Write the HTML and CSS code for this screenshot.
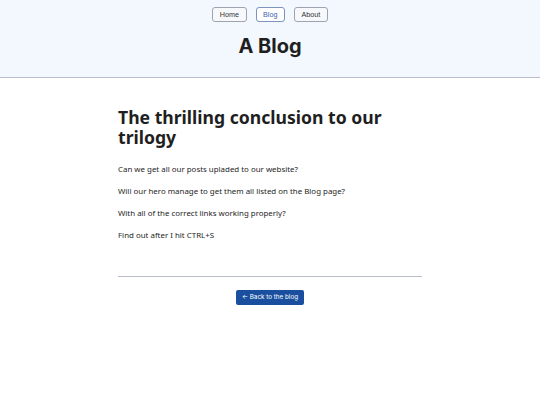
FILE: index.html
```html
<!DOCTYPE html>
<html lang="en">
<head>
    <meta charset="UTF-8">
    <meta name="viewport" content="width=device-width, initial-scale=1.0">
    <title>A Blog</title>
    <link rel="stylesheet" href="styles.css">
</head>
<body>
    <header class="site-header">
        <nav class="nav">
            <a href="#" class="nav-button">Home</a>
            <a href="#" class="nav-button current">Blog</a>
            <a href="#" class="nav-button">About</a>
        </nav>
        <h1 class="site-title">A Blog</h1>
    </header>

    <main class="post">
        <h1 class="post-title">The thrilling conclusion to our trilogy</h1>
        <p>Can we get all our posts upladed to our website?</p>
        <p>Will our hero manage to get them all listed on the Blog page?</p>
        <p>With all of the correct links working properly?</p>
        <p>Find out after I hit CTRL+S</p>

        <hr class="divider">
        <div class="back">
            <a href="#" class="back-button">&larr; Back to the blog</a>
        </div>
    </main>
</body>
</html>
```

FILE: styles.css
```css
body {
    font-family: "Noto Sans", sans-serif;
    color: #1e1e1e;
    background: #fff;
    margin: 0;
}
.site-header {
    background-color: #f3f7fe;
    border-bottom: 1px solid #b9bdcb;
    padding: 7px 0 0;
    height: 70px;
    text-align: center;
}
.nav {
    display: flex;
    justify-content: center;
    gap: 9px;
}
.nav-button {
    font-family: "Liberation Sans", Arial, sans-serif;
    font-size: 7.2px;
    line-height: 13px;
    color: #333;
    text-decoration: none;
    background: #f6f8fc;
    border: 1px solid #9ea3b0;
    border-radius: 3px;
    padding: 0 6.5px;
}
.nav-button.current {
    color: #3a64b0;
    border-color: #7e93bf;
    background: #fff;
}
.site-title {
    font-family: Inter, sans-serif;
    font-size: 20px;
    font-weight: 700;
    color: #1f1f1f;
    margin: 12px 0 0;
}
.post {
    width: 304px;
    margin: 0 auto;
    padding-top: 29px;
}
.post-title {
    font-size: 17.6px;
    line-height: 20px;
    font-weight: 700;
    color: #1f1f1f;
    margin: 0 0 16px;
}
.post p {
    font-size: 7.9px;
    line-height: 12px;
    margin: 0 0 10px;
}
.divider {
    border: none;
    border-top: 1px solid #b9bdcb;
    margin: 35px 0 5px;
}
.back {
    text-align: center;
}
.back-button {
    display: inline-block;
    font-family: Inter, sans-serif;
    font-size: 6.3px;
    line-height: 15px;
    color: #fff;
    text-decoration: none;
    background-color: #1a4fa0;
    border-radius: 2px;
    padding: 0 5.5px;
}
```
